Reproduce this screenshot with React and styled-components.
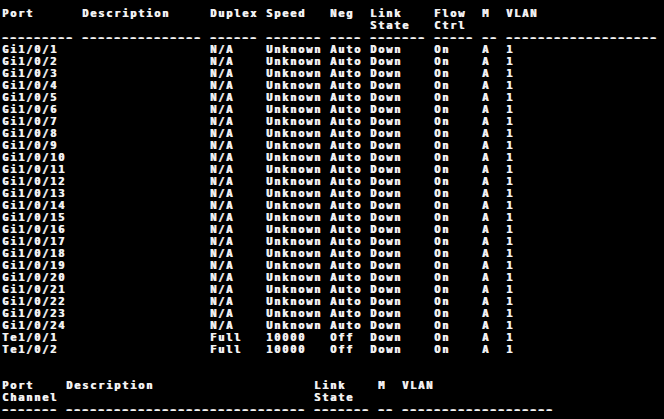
import React from "react";
import styled, { createGlobalStyle } from "styled-components";

const GlobalStyle = createGlobalStyle`
  html, body {
    margin: 0;
    padding: 0;
    background: #000;
    width: 664px;
    height: 419px;
    overflow: hidden;
  }
`;

const Console = styled.div`
  box-sizing: border-box;
  width: 664px;
  height: 419px;
  background: #000;
  padding: 7px 0 0 2px;
  color: #f2f2f2;
  font-family: "DejaVu Sans Mono", "Liberation Mono", monospace;
  font-weight: bold;
  font-size: 10.3px;
  letter-spacing: 1.8px;
  line-height: 12px;
  overflow: hidden;
`;

const Section = styled.section`
  display: flex;
  flex-direction: column;
  margin-bottom: ${(p) => (p.$gap ? p.$gap * 12 : 0)}px;
`;

const Line = styled.div`
  display: grid;
  grid-template-columns: ${(p) => p.$cols.map((c) => `${c * 8}px`).join(" ")};
  height: 12px;
  white-space: pre;
`;

const Cell = styled.span`
  text-shadow: 0.7px 0 0 #f2f2f2;
`;

const Rule = styled.span`
  text-shadow: 1.2px 0 0 #f2f2f2, -1.1px 0 0 #f2f2f2;
`;

const COLS1 = [10, 16, 7, 8, 5, 8, 6, 3, 19];
const COLS2 = [8, 31, 8, 3, 19];

const head1 = [
  ["Port", "Description", "Duplex", "Speed", "Neg", "Link", "Flow", "M", "VLAN"],
  ["", "", "", "", "", "State", "Ctrl", "", ""],
];
const rule1 = [9, 15, 6, 7, 4, 7, 5, 2, 19];

const rows1 = [
  ...Array.from({ length: 24 }, (_, i) => [
    `Gi1/0/${i + 1}`, "", "N/A", "Unknown", "Auto", "Down", "On", "A", "1",
  ]),
  ["Te1/0/1", "", "Full", "10000", "Off", "Down", "On", "A", "1"],
  ["Te1/0/2", "", "Full", "10000", "Off", "Down", "On", "A", "1"],
];

const head2 = [
  ["Port", "Description", "Link", "M", "VLAN"],
  ["Channel", "", "State", "", ""],
];
const rule2 = [7, 30, 7, 2, 19];

function TextLine({ cols, cells }) {
  return (
    <Line $cols={cols}>
      {cells.map((c, i) => (
        <Cell key={i}>{c}</Cell>
      ))}
    </Line>
  );
}

function RuleLine({ cols, lengths }) {
  return (
    <Line $cols={cols}>
      {lengths.map((n, i) => (
        <Rule key={i}>{"-".repeat(n)}</Rule>
      ))}
    </Line>
  );
}

export default function App() {
  return (
    <>
      <GlobalStyle />
      <Console>
        <Section $gap={2}>
          {head1.map((r, i) => (
            <TextLine key={`h${i}`} cols={COLS1} cells={r} />
          ))}
          <RuleLine cols={COLS1} lengths={rule1} />
          {rows1.map((r, i) => (
            <TextLine key={`r${i}`} cols={COLS1} cells={r} />
          ))}
        </Section>
        <Section>
          {head2.map((r, i) => (
            <TextLine key={`c${i}`} cols={COLS2} cells={r} />
          ))}
          <RuleLine cols={COLS2} lengths={rule2} />
        </Section>
      </Console>
    </>
  );
}
